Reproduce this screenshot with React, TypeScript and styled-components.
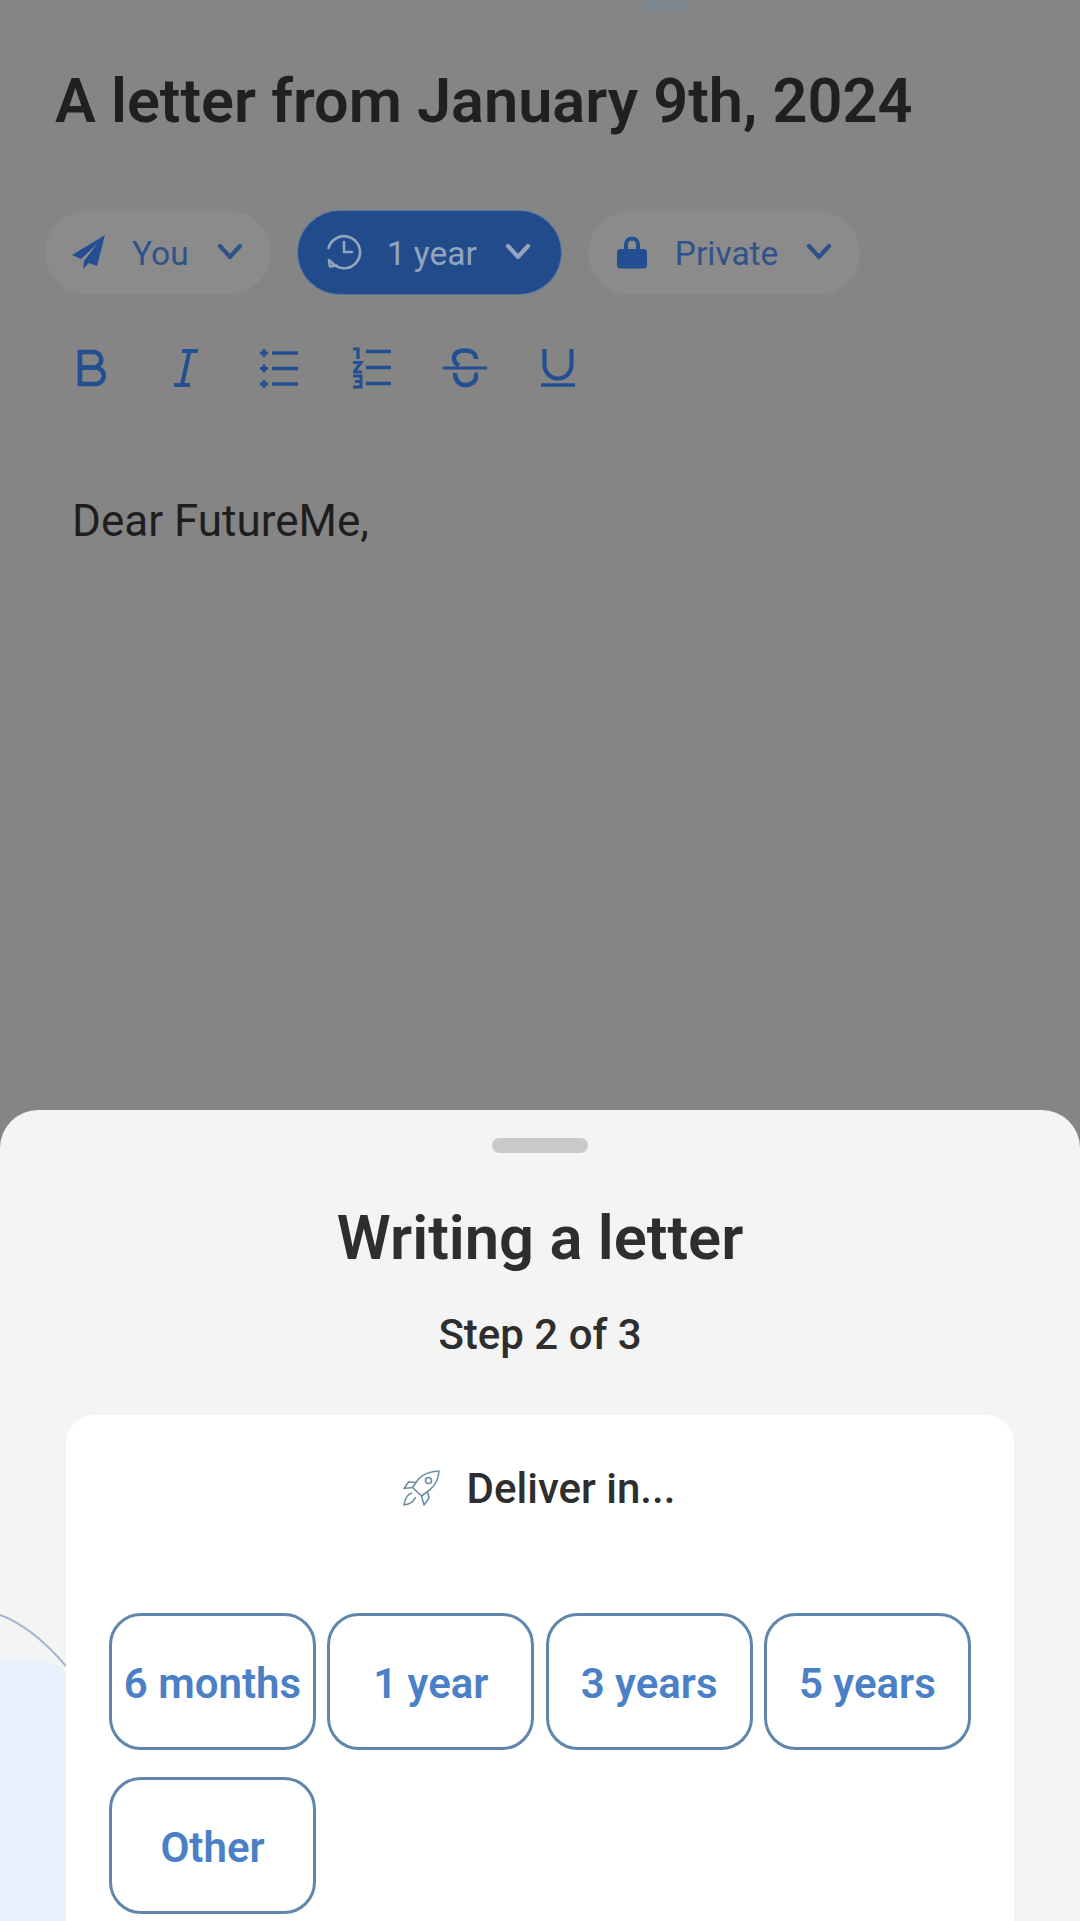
import React from "react";
import styled, { createGlobalStyle } from "styled-components";

const Global = createGlobalStyle`
  html, body { margin: 0; padding: 0; background: #858586; }
  * { box-sizing: border-box; }
`;

const Page = styled.div`
  width: 1080px;
  height: 1921px;
  overflow: hidden;
  position: relative;
  display: flex;
  flex-direction: column;
  font-family: Roboto, "Liberation Sans", sans-serif;
`;

const Editor = styled.main`
  height: 1110px;
  flex: none;
  background: #858586;
  padding-top: 65px;
  position: relative;
`;

const TopTab = styled.div`
  position: absolute;
  top: -10px;
  left: 642px;
  width: 46px;
  height: 22px;
  border-radius: 12px;
  background: #7c868e;
`;

const LetterTitle = styled.h1`
  margin: 0 0 0 55px;
  font-size: 61.2px;
  line-height: 72px;
  font-weight: 600;
  color: #202020;
`;

const PillRow = styled.div`
  display: flex;
  gap: 27px;
  margin: 74px 0 0 45px;
`;

const Pill = styled.div<{ $active?: boolean }>`
  height: 83px;
  border-radius: 42px;
  display: flex;
  align-items: center;
  padding: ${(p) => (p.$active ? "2px 30px 0 28px" : "2px 28px 0 26px")};
  background: ${(p) => (p.$active ? "#224b8c" : "#8b8b8c")};
  color: ${(p) => (p.$active ? "#94a4bd" : "#2f5288")};
  box-shadow: ${(p) => (p.$active ? "0 0 0 1px #5a77a3" : "none")};
  font-size: 33.500px;
  font-weight: 400;
`;

const PillIcon = styled.span`
  width: 36px;
  height: 36px;
  display: flex;
  align-items: center;
  justify-content: center;
  margin: -4px 25px 0 0;
  flex: none;
  color: #94a4bd;
`;

const PillChevron = styled.svg`
  width: 26px;
  height: 18px;
  margin: -4px 0 0 28px;
  flex: none;
`;

const Toolbar = styled.div`
  display: grid;
  grid-template-columns: repeat(6, 93px);
  margin: 52px 0 0 46px;
  height: 44px;
  align-items: center;
  justify-items: center;
  color: #234f92;
`;

const Body = styled.p`
  margin: 106px 0 0 72px;
  font-size: 44px;
  line-height: 50px;
  font-weight: 400;
  color: #1e1e1e;
`;

const Sheet = styled.section`
  flex: 1;
  background: #f4f4f5;
  border-radius: 38px 38px 0 0;
  position: relative;
  overflow: hidden;
  display: flex;
  flex-direction: column;
  align-items: center;
  padding-top: 28px;
`;

const Wash = styled.svg`
  position: absolute;
  left: 0;
  top: 490px;
  width: 66px;
  height: 321px;
`;

const Handle = styled.div`
  width: 96px;
  height: 15px;
  border-radius: 8px;
  background: #c9c9c9;
`;

const SheetTitle = styled.h2`
  margin: 49px 0 0;
  font-size: 61.500px;
  line-height: 72px;
  font-weight: 600;
  color: #2e2e2e;
`;

const Step = styled.div`
  margin-top: 37px;
  font-size: 42px;
  line-height: 48px;
  font-weight: 500;
  color: #2e2e2e;
`;

const Card = styled.div`
  position: relative;
  width: 948px;
  flex: 1;
  margin-top: 56px;
  background: #fff;
  border-radius: 28px 28px 0 0;
  padding-top: 49px;
`;

const CardHeader = styled.div`
  display: flex;
  align-items: center;
  justify-content: center;
  gap: 27px;
  height: 48px;
  font-size: 42px;
  font-weight: 500;
  color: #2e2e2e;
  padding-right: 2px;
`;

const Options = styled.div`
  display: grid;
  grid-template-columns: repeat(4, 207px);
  column-gap: 11.3px;
  row-gap: 27px;
  margin: 101px 0 0 43px;
`;

const Option = styled.button`
  height: 137px;
  padding: 3px 0 0;
  background: #fff;
  border: 3px solid #5f86ab;
  border-radius: 32px;
  font-family: inherit;
  font-size: 42px;
  font-weight: 600;
  color: #4b7fc6;
  white-space: nowrap;
`;

const Chevron = () => (
  <PillChevron viewBox="0 0 26 18" fill="none" stroke="currentColor" strokeWidth="4.2" strokeLinecap="round" strokeLinejoin="round">
    <path d="M3 3l10 11L23 3" />
  </PillChevron>
);

const Plane = () => (
  <svg width="36" height="36" viewBox="0 0 36 36" fill="#234f92">
    <path d="M34 1 L1 21 L10 25 L26 10 L13 27 L12 35 L18 29 L26 32 Z" />
  </svg>
);

const HistoryClock = () => (
  <svg width="36" height="38" viewBox="0 0 36 38" fill="none" stroke="currentColor" strokeWidth="2.6" strokeLinecap="round" strokeLinejoin="round">
    <path d="M2.6 15A16 16 0 1 1 5 28.500" />
    <path d="M3 27v6.500h7" transform="rotate(-8 3 27)" />
    <path d="M18 9v10h8" />
  </svg>
);

const Lock = () => (
  <svg width="30" height="34" viewBox="0 0 30 34" fill="#234f92">
    <path d="M7 14V9.500a8 8 0 0 1 16 0V14h3.500A3.500 3.500 0 0 1 30 17.500V30a3.500 3.500 0 0 1-3.500 3.500h-23A3.500 3.500 0 0 1 0 30V17.500A3.500 3.500 0 0 1 3.500 14Zm4 0h8V9.500a4 4 0 0 0-8 0Z" fillRule="evenodd" />
  </svg>
);

const BoldIcon = () => (
  <svg width="32" height="38" viewBox="0 0 32 38" fill="none" stroke="currentColor" strokeWidth="4.600">
    <path d="M3 3h13.500a7.500 7.500 0 0 1 0 15.500H3Z" />
    <path d="M3 18.500h15.500a8 8 0 0 1 0 16.500H3Z" />
  </svg>
);

const ItalicIcon = () => (
  <svg width="24" height="38" viewBox="0 0 24 38" fill="none" stroke="currentColor" strokeWidth="4">
    <path d="M8 2h16M0 36h16M15.500 2 8 36" />
  </svg>
);

const BulletIcon = () => (
  <svg width="38" height="40" viewBox="0 0 38 40" fill="none" stroke="currentColor">
    <path d="M12 5h26M12 20.500h26M12 36h26" strokeWidth="3.500" />
    <path d="M0 5h8M4 1v8M0 20.500h8M4 16.500v8M0 36h8M4 32v8" strokeWidth="3" />
  </svg>
);

const NumberIcon = () => (
  <svg width="38" height="42" viewBox="0 0 38 42" fill="none" stroke="currentColor">
    <path d="M13 4.500h25M13 20.500h25M13 36.500h25" strokeWidth="3.500" />
    <path d="M0 2h5v10" strokeWidth="3.200" />
    <path d="M0 15.500h8l-7 9.500h8" strokeWidth="3" />
    <path d="M0 29h8v11H0M2 34.500h6" strokeWidth="3" />
  </svg>
);

const StrikeIcon = () => (
  <svg width="44" height="40" viewBox="0 0 44 40" fill="none" stroke="currentColor">
    <path d="M0 20h44" strokeWidth="3.200" />
    <path d="M33 11C33 5 28 2.500 22 2.500 15 2.500 11 5 11 10.500 11 14 13 16 16 17.500M12 25c0 7 4 12 10 12 7 0 11-4 11-8.500 0-1.500-.2-2.500-1-3.500" strokeWidth="4.500" />
  </svg>
);

const UnderlineIcon = () => (
  <svg width="34" height="38" viewBox="0 0 34 38" fill="none" stroke="currentColor">
    <path d="M3.500 0v16a13.500 13.500 0 0 0 27 0V0" strokeWidth="4.200" />
    <path d="M0 36h34" strokeWidth="3.500" />
  </svg>
);

const RocketIcon = () => (
  <svg width="37" height="36" viewBox="0 0 37 36" fill="none" stroke="#6d8fa6" strokeWidth="1.600" strokeLinejoin="round">
    <path d="M36 1C27 1.500 20 4 15.500 9L9.500 17.500 18.500 26 26.500 20C33 15 35.500 8 36 1Z" />
    <circle cx="25.500" cy="10.500" r="3" />
    <path d="M13 12.500 5.500 12 1 18.500l8.500-1" />
    <path d="M24.500 21.500 26 28l-5 7-2.500-9" />
    <path d="M9 23C4 24 2 29 1 35c6-1 10-3 11.500-8" />
  </svg>
);

const tools = [BoldIcon, ItalicIcon, BulletIcon, NumberIcon, StrikeIcon, UnderlineIcon];
const options = ["6 months", "1 year", "3 years", "5 years", "Other"];

export default function App() {
  return (
    <Page>
      <Global />
      <Editor>
        <TopTab />
        <LetterTitle>A letter from January 9th, 2024</LetterTitle>
        <PillRow>
          <Pill>
            <PillIcon><Plane /></PillIcon>
            You
            <Chevron />
          </Pill>
          <Pill $active>
            <PillIcon><HistoryClock /></PillIcon>
            1 year
            <Chevron />
          </Pill>
          <Pill>
            <PillIcon><Lock /></PillIcon>
            Private
            <Chevron />
          </Pill>
        </PillRow>
        <Toolbar>
          {tools.map((Tool, i) => (
            <Tool key={i} />
          ))}
        </Toolbar>
        <Body>Dear FutureMe,</Body>
      </Editor>
      <Sheet>
        <Wash viewBox="0 0 66 321">
          <defs>
            <linearGradient id="washFill" x1="0" y1="0" x2="0" y2="1">
              <stop offset="0" stopColor="#f4f4f5" />
              <stop offset="0.05" stopColor="#e8f0fb" />
              <stop offset="1" stopColor="#e8f0fb" />
            </linearGradient>
          </defs>
          <path d="M0 52C25 52 50 58 66 72V321H0Z" fill="url(#washFill)" />
          <path d="M0 15C25 24 47 44 66 66" fill="none" stroke="#a4b4cd" strokeWidth="2" />
        </Wash>
        <Handle />
        <SheetTitle>Writing a letter</SheetTitle>
        <Step>Step 2 of 3</Step>
        <Card>
          <CardHeader>
            <RocketIcon />
            Deliver in...
          </CardHeader>
          <Options>
            {options.map((o) => (
              <Option key={o}>{o}</Option>
            ))}
          </Options>
        </Card>
      </Sheet>
    </Page>
  );
}
